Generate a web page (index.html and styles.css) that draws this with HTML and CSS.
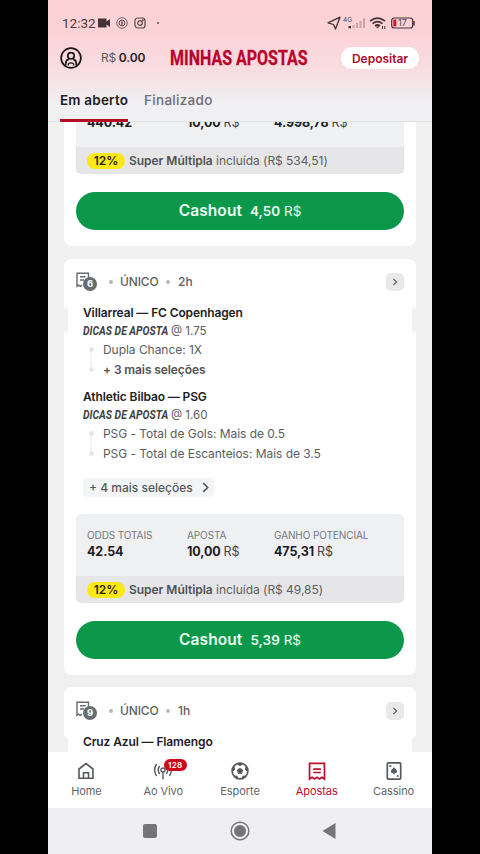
FILE: index.html
```html
<!DOCTYPE html>
<html lang="pt-BR">
<head>
<meta charset="utf-8">
<title>Minhas Apostas</title>
<link rel="stylesheet" href="styles.css">
</head>
<body>
<svg class="defs" width="0" height="0">
  <symbol id="slip" viewBox="0 0 22 20">
    <path d="M12.500 6V1.200H1v13.100l1.600-1.200 1.800 1.200 1.600-1.100M4 4.700h5.600M4 8h4" fill="none" stroke="#666b6e" stroke-width="1.400"/>
  </symbol>
  <symbol id="chevron" viewBox="0 0 10 10">
    <path d="M3 1l4 4-4 4" fill="none" stroke="currentColor" stroke-width="1.500"/>
  </symbol>
</svg>
<div class="phone">
  <header class="top">
    <div class="status">
      <span class="clock">12:32</span>
      <svg class="cam" width="14" height="10" viewBox="0 0 14 10"><path d="M1 0.500h8.500v3L13 1v8L9.500 6.500v3H1z" fill="#443437"/></svg>
      <svg class="ring" width="12" height="12" viewBox="0 0 12 12" fill="none" stroke="#5a484c"><circle cx="6" cy="6" r="5.300" stroke-width=".8"/><circle cx="6" cy="6" r="2.900"/><path d="M6 4v4M5 6h2"/></svg>
      <svg class="insta" width="12" height="12" viewBox="0 0 12 12" fill="none" stroke="#5a484c" stroke-width="1.200"><rect x="1" y="1" width="10" height="10" rx="2.800"/><circle cx="6" cy="6" r="2.300"/><circle cx="8.800" cy="3.200" r=".4"/></svg>
      <i class="tick"></i>
      <div class="signals">
        <svg width="88" height="16" viewBox="0 0 88 16">
          <path d="M0 7.800L12 2.200 7.500 14 5.500 9.500z" fill="none" stroke="#443437" stroke-width="1.300" stroke-linejoin="round"/>
          <g fill="#c5a4aa"><rect x="24.500" y="10" width="2" height="3"/><rect x="28" y="8" width="2" height="5"/><rect x="31.500" y="6" width="2" height="7"/><rect x="35" y="3.500" width="2" height="9.500"/></g><rect x="20.500" y="11" width="2.500" height="2.300" fill="#443437"/>
          <text x="15" y="7" class="net">4G</text>
          <g fill="none" stroke="#443437" stroke-width="1.700"><path d="M42 6.200q7.500-6 15 0M44.500 8.700q5-4 10 0M47 11q2.500-2 5 0"/></g><path d="M47.800 11.500h3.500l-1.700 2z" fill="#443437"/><path d="M54.500 11v3M56.800 11v3" stroke="#443437"/>
          <rect x="63.700" y="3" width="21" height="10" rx="2.500" fill="none" stroke="#443437" stroke-width="1.200"/><rect x="65.300" y="4.600" width="3" height="6.800" fill="#d3172b"/><path d="M86 6v4.500" stroke="#443437" stroke-width="1.500"/>
          <text x="70" y="11.300" class="batt">17</text>
        </svg>
      </div>
    </div>
    <div class="account">
      <svg width="22" height="22" viewBox="0 0 22 22" fill="none" stroke="#1c1718" stroke-width="1.700"><circle cx="11" cy="11" r="9.900"/><circle cx="11" cy="8.800" r="3.200"/><path d="M5.700 18.500v-1.800q0-3.600 3.100-4.600M16.300 18.500v-1.800q0-3.600-3.100-4.600"/><path d="M8.300 18.500q-.3-2.700 2.700-2.700t2.700 2.700" stroke-width="1.200"/></svg>
      <span class="balance"><span>R$</span><b>0.00</b></span>
      <h1><span>MINHAS APOSTAS</span></h1>
      <button class="deposit">Depositar</button>
    </div>
    <nav class="tabs"><span class="tab active">Em aberto</span><span class="tab">Finalizado</span></nav>
  </header>

  <main class="feed">
    <section class="card first">
      <div class="summary">
        <div class="totals">
          <div><small>ODDS TOTAIS</small><b>440.42</b></div>
          <div><small>APOSTA</small><b>10,00 <i>R$</i></b></div>
          <div><small>GANHO POTENCIAL</small><b>4.998,78 <i>R$</i></b></div>
        </div>
        <div class="bonus"><span class="pill">12%</span><span><b>Super Múltipla</b> incluída (R$ 534,51)</span></div>
      </div>
      <button class="cashout"><b>Cashout</b><span><strong>4,50</strong> R$</span></button>
    </section>

    <section class="card notched">
      <div class="head">
        <span class="slip"><svg width="22" height="20"><use href="#slip"/></svg><em>6</em></span>
        <i class="dot"></i><span class="kind">ÚNICO</span><i class="dot"></i><span>2h</span>
        <span class="open"><svg width="8" height="8"><use href="#chevron"/></svg></span>
      </div>
      <div class="groups">
        <div class="group">
          <h2 class="long">Villarreal — FC Copenhagen</h2>
          <p class="tips"><span class="dicas"><b>DICAS DE APOSTA</b></span>@ 1.75</p>
          <ul><li>Dupla Chance: 1X</li><li class="more">+ 3 mais seleções</li></ul>
        </div>
        <div class="group">
          <h2>Athletic Bilbao — PSG</h2>
          <p class="tips"><span class="dicas"><b>DICAS DE APOSTA</b></span>@ 1.60</p>
          <ul><li>PSG - Total de Gols: Mais de 0.5</li><li>PSG - Total de Escanteios: Mais de 3.5</li></ul>
        </div>
        <span class="chip">+ 4 mais seleções<svg width="11" height="11"><use href="#chevron"/></svg></span>
      </div>
      <div class="summary">
        <div class="totals">
          <div><small>ODDS TOTAIS</small><b>42.54</b></div>
          <div><small>APOSTA</small><b>10,00 <i>R$</i></b></div>
          <div><small>GANHO POTENCIAL</small><b>475,31 <i>R$</i></b></div>
        </div>
        <div class="bonus"><span class="pill">12%</span><span><b>Super Múltipla</b> incluída (R$ 49,85)</span></div>
      </div>
      <button class="cashout"><b>Cashout</b><span><strong>5,39</strong> R$</span></button>
    </section>

    <section class="card notched last">
      <div class="head">
        <span class="slip"><svg width="22" height="20"><use href="#slip"/></svg><em>9</em></span>
        <i class="dot"></i><span class="kind">ÚNICO</span><i class="dot"></i><span>1h</span>
        <span class="open"><svg width="8" height="8"><use href="#chevron"/></svg></span>
      </div>
      <div class="groups"><div class="group"><h2>Cruz Azul — Flamengo</h2></div></div>
      <div class="rest"></div>
    </section>
  </main>

  <nav class="menu">
    <a><svg width="20" height="20" viewBox="0 0 20 20" fill="none" stroke="#55595c" stroke-width="1.600"><path d="M3 17.200V8L10 2.500 17 8v9.200zM7.500 17v-5.200h5V17"/></svg>Home</a>
    <a><svg width="20" height="20" viewBox="0 0 20 20" fill="none" stroke="#55595c" stroke-width="1.400"><circle cx="10" cy="9" r="2"/><path d="M10 11v7.500M6.700 13q-3-4 0-8M13.300 13q3-4 0-8M3.600 15q-4-6 0-12M16.400 15q4-6 0-12"/></svg><em class="count">128</em>Ao Vivo</a>
    <a><svg width="20" height="20" viewBox="0 0 20 20"><circle cx="10" cy="10" r="7.900" fill="none" stroke="#55595c" stroke-width="1.700"/><path d="M10 6.700l3.200 2.300-1.200 3.800H8L6.800 9zM6.500 2.700h7L10 5.300zM1.900 8.300l2.300-3.500 1 3.700-2.800 2.500zM18.100 8.300l-2.300-3.500-1 3.700 2.800 2.500zM4 14.500l3.500.2.700 3.200zM16 14.500l-3.500.2-.7 3.200z" fill="#55595c"/></svg>Esporte</a>
    <a class="on"><svg width="20" height="20" viewBox="0 0 20 20" fill="none" stroke="#b80f2b" stroke-width="1.700"><path d="M2.500 2.300h15v2.200q-1 1 0 2V18l-2.500-1.800-2.500 1.800L10 16.200 7.500 18 5 16.200 2.500 18V6.500q1-1 0-2zM6.200 8.100h7.600M6.200 11.500h7.600"/></svg>Apostas</a>
    <a><svg width="20" height="20" viewBox="0 0 20 20"><rect x="3.300" y="1.900" width="13.400" height="16.200" rx="1" fill="none" stroke="#55595c" stroke-width="1.700"/><path d="M10 6.200q3 2.500 3 4.200c0 1.700-2 1.900-2.600.9l.6 2H9l.6-2c-.6 1-2.600.8-2.600-.9q0-1.700 3-4.200z" fill="#55595c"/><path d="M5.300 5.100h2M12.700 15h2" stroke="#55595c" stroke-width="1.600"/></svg>Cassino</a>
  </nav>
  <div class="system">
    <svg width="16" height="20" viewBox="0 0 16 20"><rect x="1" y="3" width="14" height="14" rx="2" fill="#757577"/></svg>
    <svg width="20" height="20" viewBox="0 0 20 20"><circle cx="10" cy="10" r="8.800" fill="none" stroke="#757577" stroke-width="1.500"/><circle cx="10" cy="10" r="6" fill="#757577"/></svg>
    <svg width="16" height="20" viewBox="0 0 16 20"><path d="M0.500 10L13.500 2v16z" fill="#757577"/></svg>
  </div>
</div>
</body>
</html>
```
FILE: styles.css
```css
* { box-sizing: border-box; }
body { margin: 0; background: #000; font-family: Inter, sans-serif; color: #1c1d1f; }
h1, h2, p, ul { margin: 0; padding: 0; font-weight: inherit; }
ul { list-style: none; }
button { border: 0; font-family: inherit; padding: 0; }
em, i { font-style: normal; }
.defs { position: absolute; }
.phone { width: 384px; height: 854px; margin: 0 auto; background: #f0f0f1; display: flex; flex-direction: column; overflow: hidden; }

.top { height: 122px; flex: none; background: linear-gradient(#fbd0d5 0, #fbd3d7 35px, #f8dde1 70px, #f0eff1 102px, #f0f0f2 122px); border-bottom: 1px solid #dedfe1; }
.status { display: flex; align-items: center; height: 46px; padding: 0 16px 0 14px; }
.clock { font: 400 13.500px Roboto, sans-serif; color: #4a3b3f; width: 34px; white-space: nowrap; }
.cam { margin-left: 1px; }
.ring { margin-left: 5px; }
.insta { margin-left: 6px; }
.tick { width: 2px; height: 2px; background: #5a484c; border-radius: 50%; margin-left: 11px; }
.signals { margin-left: auto; display: flex; }
.signals svg { overflow: visible; }
.net { font: 6.500px Inter, sans-serif; fill: #54454a; }
.batt { font: 9px Inter, sans-serif; fill: #54454a; }
.account { display: flex; align-items: center; height: 24px; padding-left: 12px; }
.balance { display: flex; gap: 3px; margin-left: 19px; width: 69px; font-size: 12px; line-height: 16px; color: #5f595c; }
.balance span { letter-spacing: -.3px; }
.balance b { color: #211d1f; font-weight: 600; font-size: 12px; letter-spacing: -.1px; }
h1 { width: 138px; font: 700 20px/22px Roboto, sans-serif; color: #b9042b; white-space: nowrap; }
h1 span { display: block; transform: scaleX(.8); transform-origin: 0 50%; -webkit-text-stroke: .3px #b9042b; }
.deposit { width: 78px; height: 22px; border-radius: 11px; background: #fff; color: #ad0b2b; font-weight: 600; font-size: 12px; margin-left: 33px; }
.tabs { display: flex; gap: 16px; padding-left: 12px; height: 52px; }
.tab { font-size: 13.500px; line-height: 19px; font-weight: 500; color: #6c6d71; padding-top: 21px; height: 52px; letter-spacing: .3px; white-space: nowrap; }
.tab.active { width: 68px; font-weight: 600; letter-spacing: .2px; color: #1d1d1f; border-bottom: 3px solid #b60b29; border-radius: 1px; }

.feed { flex: 1; min-height: 0; overflow: hidden; padding: 0 16px; }
.card { position: relative; background: #fff; border-radius: 8px; padding: 13px 12px 16px; margin-bottom: 12px; }
.card.first { margin-top: -50px; margin-bottom: 13px; }
.card.last { padding-top: 14px; }
.notched::before, .notched::after { content: ""; position: absolute; top: 49px; width: 4px; height: 24px; background: #f0f0f1; }
.notched::before { left: 0; border-radius: 0 4px 4px 0; }
.notched::after { right: 0; border-radius: 4px 0 0 4px; }
.head { display: flex; align-items: center; height: 19px; font-size: 12px; font-weight: 500; color: #5c5e61; }
.slip { position: relative; width: 22px; height: 20px; }
.slip svg { display: block; }
.slip em { position: absolute; left: 7px; top: 5px; width: 14px; height: 14px; border-radius: 50%; background: #666d71; color: #fff; font-size: 9.500px; line-height: 14px; font-weight: 700; text-align: center; }
.dot { width: 4px; height: 4px; border-radius: 50%; background: #b4b8bb; margin: 0 8px; }
.slip + .dot { margin-left: 11px; }
.kind { width: 38px; letter-spacing: -.15px; margin-left: -1px; }
.open { margin-left: auto; width: 18px; height: 18px; border-radius: 5px; background: #e9e9ea; display: flex; align-items: center; justify-content: center; }
.groups { padding: 13px 7px 0 7px; white-space: nowrap; }
.group { margin-bottom: 9px; }
h2 { font-size: 12px; font-weight: 600; line-height: 17.500px; letter-spacing: -.12px; }
.tips { display: flex; font-size: 11.500px; line-height: 18px; height: 17.500px; color: #5a5c5f; }
.dicas { width: 88px; }
.dicas b { display: inline-block; font: italic 700 12px/17px Roboto, sans-serif; color: #3f4143; transform: scaleX(.865); transform-origin: 0 50%; }
ul { padding: 1px 0 0 20px; position: relative; }
ul::before { content: ""; position: absolute; left: 7px; top: 11px; width: 2px; height: 20px; background: #f4f4f5; }
li { position: relative; font-size: 12px; line-height: 19.500px; letter-spacing: -.04px; color: #5a5c5f; }
li::before { content: ""; position: absolute; left: -14.500px; top: 7px; width: 5px; height: 5px; border-radius: 50%; background: #e8e8ea; }
.more { font-weight: 600; letter-spacing: -.1px; color: #505255; }
.chip { display: inline-flex; align-items: center; gap: 7px; height: 19px; margin-top: 6px; padding: 0 3px 0 6px; border-radius: 4px; background: #f3f4f5; font-size: 12px; font-weight: 500; color: #56585b; vertical-align: top; }
.summary { margin-top: 16px; border-radius: 5px; overflow: hidden; background: #eff0f2; }
.chip { margin-bottom: 1px; }
.first .summary { margin-top: 0; }
.totals { height: 62px; padding: 14px 11px 0; display: grid; grid-template-columns: 100px 87px 1fr; white-space: nowrap; }
.totals small { display: block; font-size: 10px; line-height: 14px; letter-spacing: -.1px; color: #75787c; }
.totals b { display: block; font-size: 12.500px; line-height: 18px; margin-top: 1px; font-weight: 700; letter-spacing: -.08px; }
.totals i { font-weight: 400; color: #444; }
.bonus { height: 27px; background: #e6e6e8; padding-left: 11px; display: flex; align-items: center; gap: 4px; font-size: 12px; letter-spacing: -.03px; color: #5b5d60; white-space: nowrap; }
.bonus b { font-weight: 600; color: #505255; }
.pill { width: 38px; height: 16px; border-radius: 8px; background: #fae916; color: #29270f; font-weight: 600; text-align: center; line-height: 16px; }
.cashout { width: 100%; height: 38px; border-radius: 19px; background: #0b984a; color: #eafff1; margin-top: 18px; display: flex; align-items: center; justify-content: center; gap: 8px; font-size: 13.500px; }
.cashout b { font-size: 15.500px; font-weight: 600; position: relative; top: -1px; letter-spacing: .1px; }
.cashout strong { font-weight: 600; }
.rest { height: 200px; }

.menu { flex: none; height: 56px; background: #fff; display: grid; grid-template-columns: repeat(5, 76.800px); position: relative; }
.menu a { position: relative; display: flex; flex-direction: column; align-items: center; padding-top: 9px; gap: 2px; font-size: 11px; line-height: 16px; letter-spacing: -.07px; color: #626569; }
.menu a.on { color: #b80f2b; }
.count { position: absolute; left: 39px; top: 7px; width: 23px; height: 12px; border-radius: 6px; background: #cf0819; color: #fff; font-size: 8px; line-height: 12px; font-weight: 600; letter-spacing: .3px; text-align: center; }
.system { flex: none; height: 46px; background: #efeff1; display: flex; justify-content: center; align-items: center; gap: 72px; }
```
